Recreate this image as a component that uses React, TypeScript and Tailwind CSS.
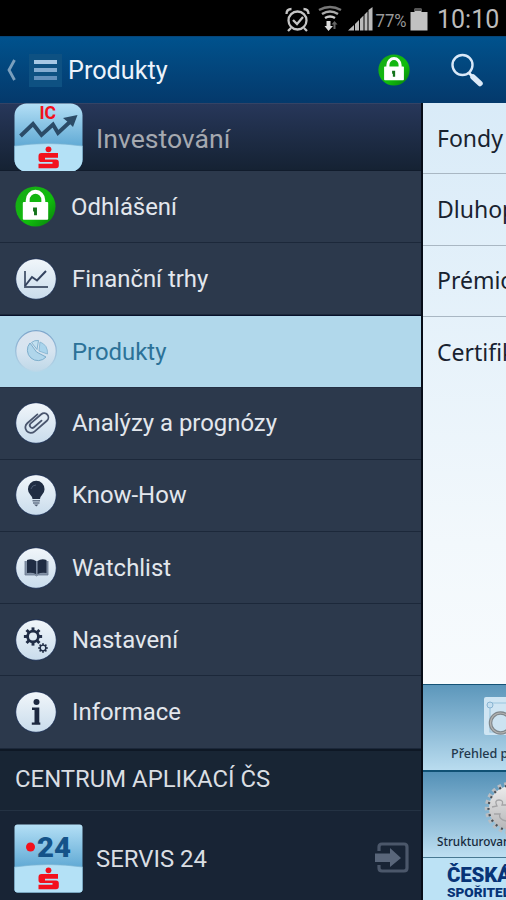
import type { ReactNode } from "react";

const Padlock = ({ size }: { size: number }) => (
  <svg width={size} height={size} viewBox="0 0 42 42">
    <defs>
      <linearGradient id="green" x1="0" y1="0" x2="1" y2="1">
        <stop offset="0" stopColor="#18a818" />
        <stop offset="0.6" stopColor="#10bd0c" />
        <stop offset="1" stopColor="#087a0c" />
      </linearGradient>
    </defs>
    <circle cx="21" cy="21" r="20.500" fill="url(#green)" />
    <path d="M13 19v-4.500a7.500 8 0 0 1 16 0V19" fill="none" stroke="#fff" strokeWidth="4" />
    <rect x="8" y="16.500" width="26" height="18" rx="1" fill="#fff" />
    <path d="M18.500 22h4v8h-3v-4h-1z" fill="#14731a" />
  </svg>
);

const Disc = ({ children, faded }: { children: ReactNode; faded?: boolean }) => (
  <svg width="42" height="42" viewBox="0 0 42 42">
    <defs>
      <linearGradient id="disc" x1="0" y1="0" x2="0" y2="1">
        <stop offset="0" stopColor="#f1f6fa" />
        <stop offset="1" stopColor="#c9dcec" />
      </linearGradient>
      <linearGradient id="discFaded" x1="0" y1="0" x2="0" y2="1">
        <stop offset="0" stopColor="#dbe4ef" />
        <stop offset="0.5" stopColor="#d6e4f0" />
        <stop offset="1" stopColor="#bfd8e8" />
      </linearGradient>
      <linearGradient id="rimFaded" x1="0" y1="0" x2="0" y2="1">
        <stop offset="0" stopColor="#7da5cb" />
        <stop offset="1" stopColor="#b9d8e9" />
      </linearGradient>
    </defs>
    <circle
      cx="21"
      cy="21"
      r="20.300"
      fill={faded ? "url(#discFaded)" : "url(#disc)"}
      stroke={faded ? "url(#rimFaded)" : "#17294f"}
      strokeWidth={faded ? 1.3 : 0.8}
    />
    {children}
  </svg>
);

const Cog = ({ x, y, scale }: { x: number; y: number; scale: number }) => (
  <g transform={`translate(${x} ${y}) scale(${scale})`}>
    <circle r="5.500" fill="none" stroke="#202d46" strokeWidth="2.800" />
    {[0, 45, 90, 135, 180, 225, 270, 315].map((a) => (
      <rect key={a} x="-1.500" y="-9.300" width="3" height="4" fill="#202d46" transform={`rotate(${a})`} />
    ))}
  </g>
);

// the "S" with a dot above, shared by both app tiles
const SavingsMark = () => (
  <g fill="#f3101c">
    <circle cx="34.500" cy="46.300" r="2.900" />
    <path d="M27.500 50H44v4.800H31v1.700h11q2.800 0 2.800 2.800v3.200q0 2.800-2.800 2.800H24.500v-4.600h14v-1.700H27.300q-2.800 0-2.800-2.800V53q0-3 3-3z" />
  </g>
);

const AppTile = ({ children, radius }: { children: ReactNode; radius: number }) => (
  <svg width="69" height="69" viewBox="0 0 69 69" className="shrink-0">
    <defs>
      <linearGradient id="tile" x1="0" y1="0" x2="0" y2="1">
        <stop offset="0" stopColor="#b5e0f6" />
        <stop offset="0.600" stopColor="#64acd6" />
      </linearGradient>
      <clipPath id={`clip${radius}`}>
        <rect width="68" height="68" x="0.500" y="0.500" rx={radius} />
      </clipPath>
    </defs>
    <g clipPath={`url(#clip${radius})`}>
      <rect width="69" height="69" fill="url(#tile)" />
      <path d="M0 43Q34 38 69 43V69H0z" fill="#b4e1f6" />
      <path d="M0 43Q34 38 69 43" fill="none" stroke="#7db4d2" strokeWidth="0.700" />
    </g>
    {children}
    <SavingsMark />
  </svg>
);

const menu = [
  { label: "Odhlášení", icon: <Padlock size={41} /> },
  {
    label: "Finanční trhy",
    icon: (
      <Disc>
        <path d="M10 13v16h23" fill="none" stroke="#4e5d74" strokeWidth="1.900" />
        <path d="M10 28l7-9 5 3.500L31 13" fill="none" stroke="#34435f" strokeWidth="2" />
      </Disc>
    ),
  },
  {
    label: "Produkty",
    active: true,
    icon: (
      <Disc faded>
        <path d="M15 13a10.500 10.500 0 1 0 16 14l-9.500-5z" fill="#b0d6eb" stroke="#7cadcb" strokeWidth="1" />
        <path d="M16.500 12.500q3-2.500 7-2l-1.500 9z" fill="#c3e0f0" stroke="#7cadcb" strokeWidth="0.900" />
        <path d="M25 12q8 3 7.500 12l-8.500-3z" fill="#a9d4ec" stroke="#88b6d1" strokeWidth="0.900" />
      </Disc>
    ),
  },
  {
    label: "Analýzy a prognózy",
    icon: (
      <Disc>
        <g transform="translate(21.500 20.500) rotate(49)" fill="none" stroke="#4a566e" strokeWidth="1.800" strokeLinecap="round">
          <path d="M-5.500-6V7.500a5.500 5.500 0 0 0 11 0V-9a4.300 4.300 0 0 0-8.600 0V5a2.500 2.500 0 0 0 5 0V-5" />
        </g>
      </Disc>
    ),
  },
  {
    label: "Know-How",
    icon: (
      <Disc>
        <path d="M17.500 25q0-2-2-4a8.300 8.300 0 1 1 11.500 0q-2 2-2 4z" fill="#202d43" />
        <path d="M17.500 26.700h7.500M18 29h6.500" stroke="#67768a" strokeWidth="1.400" />
        <path d="M19 30.500h4.500l-2.200 2z" fill="#4c5b70" />
        <path d="M16 15q1-4 5-4" fill="none" stroke="#4b5a72" strokeWidth="1" />
      </Disc>
    ),
  },
  {
    label: "Watchlist",
    icon: (
      <Disc>
        <path d="M10 14v14h10l1.500 1 1.500-1h10V14" fill="#8493a7" stroke="#68778d" strokeWidth="0.800" />
        <path d="M12 13q5-2 9 1v13q-4-2-9-1zM22.500 14q4-3 9-1v13q-5-1-9 1z" fill="#202d43" />
        <path d="M21.700 14v14" stroke="#74839a" strokeWidth="1" />
      </Disc>
    ),
  },
  {
    label: "Nastavení",
    icon: (
      <Disc>
        <Cog x={18} y={17.5} scale={0.98} />
        <Cog x={28} y={29} scale={0.52} />
      </Disc>
    ),
  },
  {
    label: "Informace",
    icon: (
      <Disc>
        <circle cx="21.500" cy="11" r="3" fill="#1c2840" />
        <path d="M17 16.500h7.300V31.500h1v2.300h-8.500v-2.300h2.700V19H17z" fill="#1c2840" />
      </Disc>
    ),
  },
];

const StatusBar = () => (
  <div className="flex h-9 items-center bg-black pl-[285px] text-[#bcbcbc]">
    <svg width="152" height="36" viewBox="285 0 152 36" className="shrink-0">
      <g fill="none" stroke="#c4c4c4" strokeWidth="2.300">
        <circle cx="297.500" cy="20.500" r="9" />
        <path d="M293 20l4 4 6-7M291 28l-3 3M304 28l3 3" />
        <path d="M286.500 14q0-5 5-5M308.500 14q0-5-5-5" />
      </g>
      <g fill="none" stroke="#8c8c8c" strokeWidth="2.500">
        <path d="M319 10q11-6 22 0" stroke="#777" />
        <path d="M322 14q8-5 16 0" stroke="#aaa" />
        <path d="M325 18q5-3 10 0" stroke="#ccc" />
      </g>
      <path d="M326.500 21h4v5h2.500l-4.500 5-4-5h2z" fill="#ddd" />
      <path d="M334.500 21l3 3.500h-2V29h-2v-4.500h-2z" fill="#666" />
      <path d="M348 30.500L354 25v5.500zM355 24l4-4v10.500h-4zM360 19l3.500-3.500v15H360zM364.500 14.500l3-3v19h-3zM368.500 10l4-3v23.500h-4z" fill="#bbb" />
      <path d="M410.500 12h4V9h7v3h6v18.500h-17z" fill="#c1c1c1" />
      <path d="M414.500 8h7v3h-7z" fill="#555" />
      <text x="375.500" y="27" fill="#999" fontFamily="Roboto, sans-serif" fontSize="19" textLength="31" lengthAdjust="spacingAndGlyphs">77%</text>
    </svg>
    <span className="mt-[3px] text-[25px] leading-9">10:10</span>
  </div>
);

const TopBar = () => (
  <header className="flex h-[67px] items-center border-t border-[#064579] bg-linear-to-b from-[#00528d] to-[#04396b] pl-[6px]">
    <svg width="11" height="22" viewBox="0 0 11 22">
      <path d="M8.500 1L3 11l5.500 10" fill="none" stroke="#7a9fbd" strokeWidth="2.800" />
    </svg>
    <div className="ml-[12px] flex h-[33px] w-[33px] flex-col items-center justify-center gap-[4px] bg-[#0e5182]">
      <div className="h-1 w-[23px] bg-[#a7c8e5]" />
      <div className="h-1 w-[23px] bg-[#84acd1]" />
      <div className="h-1 w-[23px] bg-[#6290bc]" />
    </div>
    <h1 className="ml-[6px] w-[310px] pt-[2px] text-[25.200px] text-[#ecf3fb]">Produkty</h1>
    <Padlock size={32} />
    <svg width="34" height="34" viewBox="0 0 34 34" className="ml-[40px]">
      <circle cx="12.500" cy="12" r="10" fill="none" stroke="#d9e8f8" strokeWidth="2.400" />
      <path d="M19 20l4 4" stroke="#e5effa" strokeWidth="2.500" />
      <path d="M23 24l7 6.500" stroke="#dceaf8" strokeWidth="5.500" strokeLinecap="round" />
    </svg>
  </header>
);

const Drawer = () => (
  <nav className="flex w-[423px] shrink-0 flex-col border-r-2 border-[#070d18] bg-[#2c394c]">
    <div className="flex h-[68px] items-center border-t border-b border-t-[#344365] border-b-[#111c2c] bg-linear-to-b from-[#27375a] to-[#152233] pl-[14px]">
      <AppTile radius={12}>
        <text x="25.500" y="16" fill="#f3101c" fontFamily="Roboto, sans-serif" fontSize="17.500" fontWeight="700">IC</text>
        <path d="M6.500 33L19 21l8.500 11L39 21.500l5 8.500 14-13" fill="none" stroke="#2b4b67" strokeWidth="3.900" />
        <path d="M63.500 12l-4.500 12-4-4-6-5z" fill="#2b4b67" />
      </AppTile>
      <span className="ml-[13px] pt-[4px] text-[26.600px] text-[#a5a9b0]">Investování</span>
    </div>
    <ul>
      {menu.map((item) => (
        <li
          key={item.label}
          className={
            item.active
              ? "flex h-[72.200px] items-center border-t border-b border-t-[#07112b] border-b-[#243044] bg-[#b1d8eb] pl-[15px] text-[#2c7298]"
              : "flex h-[72.200px] items-center border-b border-b-[#1c283a] bg-[#2c394c] pl-[15px] text-[#e3e7ed]"
          }
        >
          {item.icon}
          <span className="ml-[15px] pt-[2px] text-[23.900px]">{item.label}</span>
        </li>
      ))}
    </ul>
    <h2 className="flex h-[62px] items-center border-t-2 border-b border-t-[#0e1825] border-b-[#243243] bg-[#182534] pl-[15px] text-[23.900px] text-[#dadee3]">
      CENTRUM APLIKACÍ ČS
    </h2>
    <div className="flex grow items-center bg-[#182435] pt-[6px] pl-[14px]">
      <AppTile radius={3}>
        <circle cx="16.500" cy="23" r="4.500" fill="#f3101c" />
        <text x="23" y="32.500" fill="#145389" fontFamily="Roboto, sans-serif" fontSize="28" fontWeight="900" textLength="34" lengthAdjust="spacingAndGlyphs">24</text>
      </AppTile>
      <span className="ml-[13px] w-[279px] pt-[3px] text-[23.900px] text-[#dadee3]">SERVIS 24</span>
      <svg width="34" height="32" viewBox="0 0 34 32">
        <path d="M4 9V5q0-3 3-3h22q3 0 3 3v21q0 3-3 3H7q-3 0-3-3v-3" fill="none" stroke="#4b576a" strokeWidth="3.200" />
        <path d="M0 11.500h15V6l11 10-11 9v-5H0z" fill="#59667a" />
      </svg>
    </div>
  </nav>
);

const products = ["Fondy", "Dluhopisy", "Prémiové", "Certifikáty"];

const ProductsPanel = () => (
  <main className="flex w-[83px] flex-col overflow-hidden bg-linear-to-b from-[#d9ebf8] via-[#f2f8fc] via-55% to-white font-['Noto_Sans',sans-serif] whitespace-nowrap">
    <ul className="h-[581px] shrink-0">
      {products.map((name) => (
        <li key={name} className="flex h-[71.300px] items-center border-b border-[#a9b7c3] pl-[14px] text-[23px] text-[#18222f] last:border-0">
          {name}
        </li>
      ))}
    </ul>
    <div className="flex h-[86px] shrink-0 flex-col border-t border-[#155376] bg-linear-to-b from-[#5c97bb] to-[#b9dcef]">
      <svg width="24" height="58" viewBox="0 0 24 58" className="ml-[60px] shrink-0">
        <rect x="1" y="12" width="40" height="38" rx="2" fill="#cfe5f3" />
        <path d="M7 18h30v29H7z" fill="none" stroke="#9cc5de" strokeWidth="1.200" />
        <circle cx="7" cy="20" r="3" fill="#c5dff0" stroke="#87b3d1" />
        <circle cx="17.500" cy="38" r="10" fill="#cce3f1" stroke="#7f878c" strokeWidth="3.500" />
        <circle cx="17.500" cy="38" r="10" fill="none" stroke="#b4b4b2" strokeWidth="1.200" />
      </svg>
      <span className="ml-[28px] text-[12.600px] leading-[22px] font-medium text-[#22384c]">Přehled produktů</span>
    </div>
    <div className="flex h-[87px] shrink-0 flex-col border-t-2 border-[#105174] bg-linear-to-b from-[#5491b7] to-[#bddff1]">
      <svg width="24" height="62" viewBox="0 0 24 62" className="ml-[60px] shrink-0">
        <defs>
          <linearGradient id="steel" x1="0" y1="0" x2="0" y2="1">
            <stop offset="0" stopColor="#ececec" />
            <stop offset="1" stopColor="#b5b5b7" />
          </linearGradient>
        </defs>
        <circle cx="28" cy="36" r="24" fill="none" stroke="#b9bec3" strokeWidth="4.500" strokeDasharray="3.600 3" />
        <circle cx="28" cy="36" r="22" fill="url(#steel)" />
        <circle cx="28" cy="36" r="22.500" fill="none" stroke="#4a4f55" strokeWidth="2.200" strokeDasharray="2 4.200" />
        <path d="M9 35l5-1q-3-6 2-6t3 5h6M11 42h6q-2 5 6 7" fill="none" stroke="#a4a4a6" strokeWidth="1.300" />
      </svg>
      <span className="ml-[14px] text-[11.700px] leading-[14px] font-medium text-[#16293c]">Strukturované</span>
    </div>
    <div className="flex grow flex-col border-t border-[#487992] bg-[#bce2f5] pt-[7px] pl-[24px] font-['Roboto',sans-serif] font-black text-[#073477]">
      <span className="text-[20.500px] leading-[21px] tracking-[-0.200px]">ČESKÁ</span>
      <span className="text-[13.600px] leading-[12px]">SPOŘITELNA</span>
    </div>
  </main>
);

const App = () => {
  return (
    <div className="flex h-[900px] w-[506px] flex-col overflow-hidden bg-black font-['Roboto',sans-serif]">
      <StatusBar />
      <TopBar />
      <div className="flex h-[797px]">
        <Drawer />
        <ProductsPanel />
      </div>
    </div>
  );
};

export default App;
